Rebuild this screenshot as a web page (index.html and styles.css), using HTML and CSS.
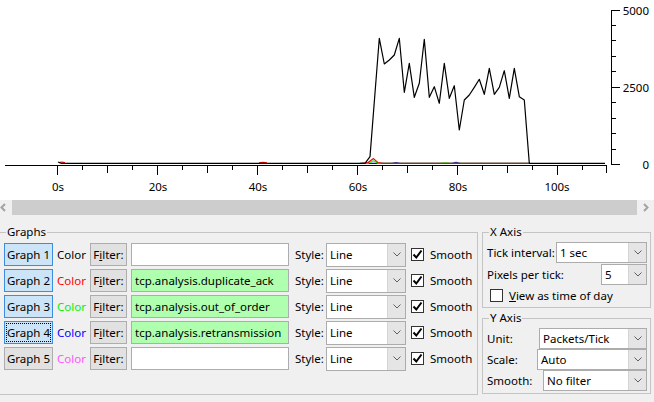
FILE: index.html
```html
<!DOCTYPE html>
<html lang="en">

<head>
    <meta charset="UTF-8">
    <title>IO Graphs</title>
    <link rel="stylesheet" href="styles.css">
</head>

<body>
    <div class="plot">
        <svg width="654" height="200" viewBox="0 0 654 200">
            <!-- x axis -->
            <g stroke="#000" stroke-width="1" shape-rendering="crispEdges">
                <line x1="5" y1="165.5" x2="607" y2="165.5" />
                <path d="M57.5 165v10M82.5 165v5M107.5 165v8M132.5 165v5M157.5 165v10M182.5 165v5M207.5 165v8M232.5 165v5
                         M257.5 165v10M282.5 165v5M307.5 165v8M332.5 165v5M357.5 165v10M382.5 165v5M407.5 165v8M432.5 165v5
                         M457.5 165v10M482.5 165v5M507.5 165v8M532.5 165v5M557.5 165v10M582.5 165v5M606.5 165v8" />
                <!-- y axis -->
                <line x1="611.5" y1="10" x2="611.5" y2="165" />
                <path d="M611 10.5h9M611 25.5h5M611 40.5h5M611 56.5h5M611 71.5h5M611 87.5h9M611 102.5h5M611 118.5h5
                         M611 133.5h5M611 149.5h5M611 164.5h9" />
            </g>
            <g class="tick-labels" text-anchor="middle">
                <text x="58" y="191">0s</text>
                <text x="158" y="191">20s</text>
                <text x="258" y="191">40s</text>
                <text x="358" y="191">60s</text>
                <text x="458" y="191">80s</text>
                <text x="557" y="191">100s</text>
            </g>
            <g class="tick-labels" text-anchor="end">
                <text x="649" y="14.5">5000</text>
                <text x="649" y="92">2500</text>
                <text x="649" y="168.5">0</text>
            </g>
            <!-- graphs 2..4 -->
            <g fill="none" stroke-width="1.2" stroke-linejoin="round">
                <polyline stroke="#0000ff" points="360,163.3 392,163.3 396,162.6 400,163.3 452,163.3 456,162.4 460,163.3 530,163.3" />
                <polyline stroke="#00ff00" points="360,163.3 368,163.3 373.5,160.8 378,163.3 440,163.3 445,162.8 450,163.3 530,163.3" />
                <polyline stroke="#ff0000" points="362,163.3 368,162.6 373.5,158.6 378,162.6 383,163.3 530,163.3" />
                <polyline stroke="#ff0000" points="59,162.6 62,162 65,162.8" />
                <polyline stroke="#ff0000" points="259,162.8 263,162.3 267,162.8" />
            </g>
            <!-- graph 1 -->
            <polyline fill="none" stroke="#000" stroke-width="1.2" stroke-linejoin="round"
                points="58,162 61,163.3 365,163.3 370,156.7 379.3,38.3 384.3,64 389.3,60 394.3,55 399.3,38.3 404.3,92.3 409.3,63.3 414.3,97.3 419.3,83.3 424.3,39.3 429.3,97.3 434.3,86.7 439.3,103.3 444.3,63.3 449.3,98.3 454.3,85.7 459.3,130 464.3,100 469.3,95 474.3,87.3 479.3,79.3 484.3,94.3 489.3,68.3 494.3,94.3 499.3,87.3 504.3,70.7 509.3,98.3 514.3,68.3 519.3,96.7 524.3,100 529.3,163.3 605,163.3" />
        </svg>
    </div>

    <div class="hscroll">
        <span class="arrow left">
            <svg width="8" height="9" viewBox="0 0 8 9"><polyline points="5,1 1.5,4.5 5,8" fill="none" stroke="#a3a3a3" stroke-width="2" /></svg>
        </span>
        <span class="track"></span>
        <span class="arrow right">
            <svg width="8" height="9" viewBox="0 0 8 9"><polyline points="2,1 5.5,4.5 2,8" fill="none" stroke="#a3a3a3" stroke-width="2" /></svg>
        </span>
    </div>

    <div class="controls">
        <fieldset class="group graphs">
            <legend>Graphs</legend>
            <div class="graph-row">
                <button class="btn graph-btn on">Graph 1</button>
                <span class="color-label">Color</span>
                <button class="btn filter-btn">F<span class="u">i</span>lter:</button>
                <input class="filter" type="text" value="">
                <span class="style-label">Style:</span>
                <div class="combo style-combo"><span class="val">Line</span><span class="drop"><svg width="8" height="5" viewBox="0 0 8 5"><polyline points="0.5,0.5 4,4 7.5,0.5" fill="none" stroke="#606060" /></svg></span></div>
                <span class="check on"><svg width="11" height="11" viewBox="0 0 11 11"><path d="M1.5 5.5l2.8 3L9.5 1.5" fill="none" stroke="#000" stroke-width="2" /></svg></span>
                <span class="smooth-label">Smooth</span>
            </div>
            <div class="graph-row">
                <button class="btn graph-btn on">Graph 2</button>
                <span class="color-label red">Color</span>
                <button class="btn filter-btn">F<span class="u">i</span>lter:</button>
                <input class="filter ok" type="text" value="tcp.analysis.duplicate_ack">
                <span class="style-label">Style:</span>
                <div class="combo style-combo"><span class="val">Line</span><span class="drop"><svg width="8" height="5" viewBox="0 0 8 5"><polyline points="0.5,0.5 4,4 7.5,0.5" fill="none" stroke="#606060" /></svg></span></div>
                <span class="check on"><svg width="11" height="11" viewBox="0 0 11 11"><path d="M1.5 5.5l2.8 3L9.5 1.5" fill="none" stroke="#000" stroke-width="2" /></svg></span>
                <span class="smooth-label">Smooth</span>
            </div>
            <div class="graph-row">
                <button class="btn graph-btn on">Graph 3</button>
                <span class="color-label green">Color</span>
                <button class="btn filter-btn">F<span class="u">i</span>lter:</button>
                <input class="filter ok" type="text" value="tcp.analysis.out_of_order">
                <span class="style-label">Style:</span>
                <div class="combo style-combo"><span class="val">Line</span><span class="drop"><svg width="8" height="5" viewBox="0 0 8 5"><polyline points="0.5,0.5 4,4 7.5,0.5" fill="none" stroke="#606060" /></svg></span></div>
                <span class="check on"><svg width="11" height="11" viewBox="0 0 11 11"><path d="M1.5 5.5l2.8 3L9.5 1.5" fill="none" stroke="#000" stroke-width="2" /></svg></span>
                <span class="smooth-label">Smooth</span>
            </div>
            <div class="graph-row">
                <button class="btn graph-btn on focus">Graph 4</button>
                <span class="color-label blue">Color</span>
                <button class="btn filter-btn">F<span class="u">i</span>lter:</button>
                <input class="filter ok" type="text" value="tcp.analysis.retransmission">
                <span class="style-label">Style:</span>
                <div class="combo style-combo"><span class="val">Line</span><span class="drop"><svg width="8" height="5" viewBox="0 0 8 5"><polyline points="0.5,0.5 4,4 7.5,0.5" fill="none" stroke="#606060" /></svg></span></div>
                <span class="check on"><svg width="11" height="11" viewBox="0 0 11 11"><path d="M1.5 5.5l2.8 3L9.5 1.5" fill="none" stroke="#000" stroke-width="2" /></svg></span>
                <span class="smooth-label">Smooth</span>
            </div>
            <div class="graph-row">
                <button class="btn graph-btn">Graph 5</button>
                <span class="color-label pink">Color</span>
                <button class="btn filter-btn">F<span class="u">i</span>lter:</button>
                <input class="filter" type="text" value="">
                <span class="style-label">Style:</span>
                <div class="combo style-combo"><span class="val">Line</span><span class="drop"><svg width="8" height="5" viewBox="0 0 8 5"><polyline points="0.5,0.5 4,4 7.5,0.5" fill="none" stroke="#606060" /></svg></span></div>
                <span class="check on"><svg width="11" height="11" viewBox="0 0 11 11"><path d="M1.5 5.5l2.8 3L9.5 1.5" fill="none" stroke="#000" stroke-width="2" /></svg></span>
                <span class="smooth-label">Smooth</span>
            </div>
        </fieldset>

        <div class="axes">
            <fieldset class="group xaxis">
                <legend>X Axis</legend>
                <div class="axis-row">
                    <span class="axis-label">Tick interval:</span>
                    <div class="combo w-tick"><span class="val">1 sec</span><span class="drop"><svg width="8" height="5" viewBox="0 0 8 5"><polyline points="0.5,0.5 4,4 7.5,0.5" fill="none" stroke="#606060" /></svg></span></div>
                </div>
                <div class="axis-row">
                    <span class="axis-label">Pixels per tick:</span>
                    <div class="combo w-pix"><span class="val">5</span><span class="drop"><svg width="8" height="5" viewBox="0 0 8 5"><polyline points="0.5,0.5 4,4 7.5,0.5" fill="none" stroke="#606060" /></svg></span></div>
                </div>
                <div class="check-row">
                    <span class="check"></span>
                    <span class="check-text"><span class="u">V</span>iew as time of day</span>
                </div>
            </fieldset>
            <fieldset class="group yaxis">
                <legend>Y Axis</legend>
                <div class="axis-row">
                    <span class="axis-label">Unit:</span>
                    <div class="combo w-unit"><span class="val">Packets/Tick</span><span class="drop"><svg width="8" height="5" viewBox="0 0 8 5"><polyline points="0.5,0.5 4,4 7.5,0.5" fill="none" stroke="#606060" /></svg></span></div>
                </div>
                <div class="axis-row">
                    <span class="axis-label">Scale:</span>
                    <div class="combo w-scale"><span class="val">Auto</span><span class="drop"><svg width="8" height="5" viewBox="0 0 8 5"><polyline points="0.5,0.5 4,4 7.5,0.5" fill="none" stroke="#606060" /></svg></span></div>
                </div>
                <div class="axis-row">
                    <span class="axis-label">Smooth:</span>
                    <div class="combo w-smooth"><span class="val">No filter</span><span class="drop"><svg width="8" height="5" viewBox="0 0 8 5"><polyline points="0.5,0.5 4,4 7.5,0.5" fill="none" stroke="#606060" /></svg></span></div>
                </div>
            </fieldset>
        </div>
    </div>
</body>

</html>
```

FILE: styles.css
```css
body {
    margin: 0;
    padding: 0;
    width: 654px;
    height: 402px;
    overflow: hidden;
    background-color: #f0f0f0;
    color: #000;
    font: 11.5px "Segoe UI", "Noto Sans", sans-serif;
}

.plot {
    height: 200px;
    background-color: #fff;
}

.plot svg {
    display: block;
}

.tick-labels {
    font: 11.5px "Segoe UI", "Noto Sans", sans-serif;
    fill: #000;
}

.hscroll {
    display: flex;
    height: 15px;
}

.hscroll .arrow {
    display: flex;
    align-items: center;
    width: 12px;
    background-color: #f0f0f0;
}

.hscroll .arrow svg {
    display: block;
}

.hscroll .arrow.right {
    justify-content: center;
    width: 17px;
}

.hscroll .track {
    flex: 1;
    background-color: #cdcdcd;
}

.controls {
    display: flex;
    padding-top: 9px;
}

.group {
    margin: 0;
    padding: 0;
    min-width: 0;
    border: 1px solid #c4c4c4;
}

.group legend {
    margin-left: 2px;
    padding: 0 1px;
    line-height: 16px;
}

.graphs {
    box-sizing: border-box;
    width: 478px;
    border-left: 0;
    padding: 3px 0 24px 4px;
}

.graph-row {
    display: flex;
    align-items: center;
    height: 23px;
}

.graph-row + .graph-row {
    margin-top: 3px;
}

.btn {
    box-sizing: border-box;
    height: 23px;
    padding: 0;
    border: 1px solid #adadad;
    background-color: #e1e1e1;
    color: #000;
    font: inherit;
}

.graph-btn {
    width: 49px;
}

.graph-btn.on {
    border-color: #3b8de0;
    background-color: #cce4f7;
}

.graph-btn.focus {
    outline: 1px dotted #000;
    outline-offset: -3px;
}

.u {
    text-decoration: underline;
}

.color-label {
    width: 33px;
    margin-left: 4px;
}

.red {
    color: #ff0000;
}

.green {
    color: #00f000;
}

.blue {
    color: #0000ff;
}

.pink {
    color: #ff55ff;
}

.filter-btn {
    width: 37px;
}

.filter {
    box-sizing: border-box;
    width: 158px;
    height: 23px;
    margin: 0 0 0 4px;
    padding: 0 3px;
    border: 1px solid #abadb3;
    background-color: #fff;
    font: inherit;
    color: #000;
}

.filter.ok {
    background-color: rgb(175, 255, 175);
}

.style-label {
    width: 31px;
    margin-left: 6px;
}

.combo {
    box-sizing: border-box;
    display: flex;
    height: 21px;
    border: 1px solid #acacac;
    background-color: #fff;
}

.combo .val {
    flex: 1;
    padding-left: 3px;
    line-height: 19px;
    white-space: nowrap;
}

.combo .drop {
    display: flex;
    align-items: center;
    justify-content: center;
    width: 17px;
    border-left: 1px solid #d4d4d4;
    background-color: #e5e5e5;
}

.style-combo {
    width: 80px;
    height: 24px;
}

.style-combo .val {
    line-height: 22px;
}

.check {
    box-sizing: border-box;
    display: flex;
    align-items: center;
    justify-content: center;
    width: 13px;
    height: 13px;
    border: 1px solid #333;
    background-color: #fff;
}

.graph-row .check {
    margin-left: 5px;
}

.smooth-label {
    margin-left: 6px;
}

.axes {
    display: flex;
    flex-direction: column;
    width: 169px;
    margin-left: 4px;
}

.xaxis {
    padding: 2px 3px 3px 4px;
}

.yaxis {
    margin-top: 2px;
    padding: 2px 3px 2px 4px;
}

.axis-row {
    display: flex;
    align-items: center;
    height: 21px;
}

.xaxis .axis-row + .axis-row {
    margin-top: 1px;
}

.axis-label {
    flex: 1;
    white-space: nowrap;
}

.w-tick {
    width: 91px;
}

.w-pix {
    width: 46px;
}

.w-unit {
    width: 108px;
}

.w-scale {
    width: 110px;
}

.w-smooth {
    width: 104px;
}

.check-row {
    display: flex;
    align-items: center;
    height: 18px;
    margin-top: 1px;
    padding-left: 3px;
}

.check-text {
    margin-left: 6px;
}
```
